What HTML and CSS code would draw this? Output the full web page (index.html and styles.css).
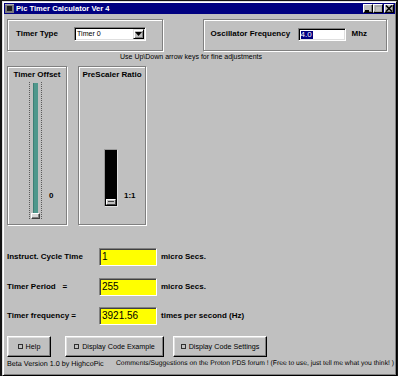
FILE: index.html
```html
<!DOCTYPE html>
<html>
<head>
<meta charset="utf-8">
<title>Pic Timer Calculator Ver 4</title>
<link rel="stylesheet" href="styles.css">
</head>
<body>
<div class="window">
  <div class="titlebar">
    <svg class="app-icon" width="9" height="9" viewBox="0 0 9 9"><rect x="0" y="0" width="9" height="9" fill="#7a7a7a"/><rect x="0" y="0" width="9" height="1" fill="#b0b0b0"/><rect x="2" y="2" width="5" height="5" fill="#1c1c1c"/></svg>
    <span class="title">Pic Timer Calculator Ver 4</span>
    <div class="caption-buttons">
      <span class="cap-btn"><svg width="8" height="7" viewBox="0 0 8 7"><rect x="1" y="5" width="4" height="2" fill="#000"/></svg></span>
      <span class="cap-btn"><svg width="8" height="7" viewBox="0 0 8 7"><rect x="1.5" y="0.5" width="6" height="6" fill="none" stroke="#a8a8a8"/><rect x="1" y="0" width="7" height="2" fill="#a8a8a8"/></svg></span>
      <span class="cap-btn cap-close"><svg width="8" height="7" viewBox="0 0 8 7"><path d="M1 0.5 L7 6.5 M7 0.5 L1 6.5" stroke="#000" stroke-width="1.6"/></svg></span>
    </div>
  </div>
  <div class="content">
    <div class="top-row">
      <div class="group group-type">
        <span class="lbl type-lbl">Timer Type</span>
        <div class="combo">
          <span class="combo-text">Timer 0</span>
          <span class="combo-btn"><svg width="7" height="4" viewBox="0 0 7 4"><path d="M0 0 H7 L3.5 4 Z" fill="#000"/></svg></span>
        </div>
      </div>
      <div class="group group-osc">
        <span class="lbl osc-lbl">Oscillator Frequency</span>
        <div class="textbox"><span class="sel">4.0</span></div>
        <span class="lbl mhz">Mhz</span>
      </div>
    </div>
    <div class="hint">Use Up\Down arrow keys for fine adjustments</div>
    <div class="slider-row">
      <div class="group slider-box offset-box">
        <div class="box-title">Timer Offset</div>
        <div class="box-body">
          <div class="ticks">
            <div class="track"></div>
            <div class="thumb"></div>
          </div>
          <span class="val val-offset">0</span>
        </div>
      </div>
      <div class="group slider-box prescale-box">
        <div class="box-title">PreScaler Ratio</div>
        <div class="box-body">
          <div class="bar">
            <div class="bar-thumb"></div>
          </div>
          <span class="val val-ratio">1:1</span>
        </div>
      </div>
    </div>
    <div class="fields">
      <span class="flabel">Instruct. Cycle Time</span>
      <div class="yfield">1</div>
      <span class="unit">micro Secs.</span>
      <span class="flabel">Timer Period   =</span>
      <div class="yfield">255</div>
      <span class="unit">micro Secs.</span>
      <span class="flabel">Timer frequency =</span>
      <div class="yfield">3921.56</div>
      <span class="unit">times per second (Hz)</span>
    </div>
    <div class="buttons">
      <div class="btn btn-help"><span class="chk"></span>Help</div>
      <div class="btn btn-example"><span class="chk"></span>Display Code Example</div>
      <div class="btn btn-settings"><span class="chk"></span>Display Code Settings</div>
    </div>
    <div class="footer">
      <span class="credit">Beta Version 1.0 by HighcoPic</span>
      <span class="comments">Comments/Suggestions on the Proton PDS forum ! (Free to use, just tell me what you think! )</span>
    </div>
  </div>
</div>
</body>
</html>
```
FILE: styles.css
```css
* { box-sizing: border-box; }
html, body { margin: 0; padding: 0; }
body {
  width: 398px;
  height: 376px;
  overflow: hidden;
  background: #141414;
  padding: 1px 0 0 2px;
  font-family: "Liberation Sans", Arial, sans-serif;
  color: #000;
}
.window {
  width: 395px;
  height: 375px;
  background: #c0c0c0;
  border: 1px solid;
  border-color: #dfdfdf #000 #000 #dfdfdf;
  box-shadow: inset 1px 1px #fff, inset -1px -1px #808080;
  padding: 1px;
  display: flex;
  flex-direction: column;
}
.titlebar {
  height: 11px;
  background: #000080;
  color: #fff;
  display: flex;
  align-items: center;
}
.app-icon { margin-left: 1px; display: block; }
.title {
  margin-left: 2px;
  font-weight: bold;
  font-size: 7.6px;
  line-height: 11px;
  white-space: nowrap;
}
.caption-buttons {
  margin-left: auto;
  margin-right: 1px;
  display: flex;
}
.cap-btn {
  width: 10px;
  height: 9px;
  background: #c0c0c0;
  border: 1px solid;
  border-color: #fff #000 #000 #fff;
  box-shadow: inset -1px -1px #808080;
  display: flex;
  align-items: center;
  justify-content: center;
}
.cap-btn svg { display: block; }
.cap-close { margin-left: 1px; }

.content {
  flex: 1;
  padding: 0 8px 0 3px;
  display: flex;
  flex-direction: column;
}
.group {
  border: 1px solid #808080;
  box-shadow: inset 1px 1px #fff, 1px 1px 0 #fff;
}
.top-row {
  margin-top: 5px;
  display: flex;
}
.group-type, .group-osc {
  height: 32px;
  display: flex;
  align-items: flex-start;
  padding-top: 7px;
}
.group-type { width: 156px; padding-left: 8px; }
.group-osc { width: 185px; margin-left: 40px; padding-left: 7px; }
.lbl {
  font-weight: bold;
  font-size: 8px;
  line-height: 14px;
  white-space: nowrap;
}
.type-lbl { width: 58px; }
.osc-lbl { width: 87px; }
.combo {
  width: 72px;
  height: 14px;
  background: #fff;
  border: 1px solid;
  border-color: #808080 #fff #fff #808080;
  box-shadow: inset 1px 1px #000, inset -1px -1px #dfdfdf;
  display: flex;
  align-items: center;
  padding: 2px 1px 2px 2px;
}
.combo-text {
  font-size: 7.1px;
  line-height: 10px;
  flex: 1;
  white-space: nowrap;
}
.combo-btn {
  width: 11px;
  height: 10px;
  background: #c0c0c0;
  border: 1px solid;
  border-color: #dfdfdf #000 #000 #dfdfdf;
  box-shadow: inset 1px 1px #fff, inset -1px -1px #808080;
  display: flex;
  align-items: center;
  justify-content: center;
}
.combo-btn svg { display: block; }
.textbox {
  width: 48px;
  height: 13px;
  margin-top: 1px;
  background: #fff;
  border: 1px solid;
  border-color: #808080 #fff #fff #808080;
  box-shadow: inset 1px 1px #000, inset -1px -1px #dfdfdf;
  padding: 2px 0 0 2px;
  display: flex;
  align-items: flex-start;
}
.sel {
  background: #000080;
  color: #fff;
  font-size: 8px;
  line-height: 8px;
  height: 8px;
  padding: 0 1px 0 0;
}
.mhz { margin-left: 6px; }

.hint {
  height: 15px;
  padding-left: 113px;
  font-size: 7px;
  line-height: 12px;
  white-space: nowrap;
}

.slider-row {
  display: flex;
  height: 159px;
}
.slider-box {
  height: 159px;
  display: flex;
  flex-direction: column;
}
.offset-box { width: 60px; }
.prescale-box { width: 68px; margin-left: 11px; }
.box-title {
  padding-top: 3px;
  font-weight: bold;
  font-size: 8px;
  line-height: 10px;
  text-align: center;
  white-space: nowrap;
}
.box-body {
  flex: 1;
  display: flex;
  align-items: flex-end;
}
.ticks {
  margin-left: 21px;
  margin-bottom: 5px;
  width: 13px;
  height: 137px;
  border-left: 1px dotted #5a5a5a;
  border-right: 1px dotted #5a5a5a;
  display: flex;
  flex-direction: column;
  align-items: center;
  padding-top: 1px;
}
.track {
  flex: 1;
  width: 5px;
  background: #4f978c;
  border-left: 1px solid #3c7f75;
}
.thumb {
  width: 9px;
  height: 6px;
  background: #d8d8d8;
  border: 1px solid;
  border-color: #fff #404040 #404040 #fff;
  box-shadow: inset -1px -1px #808080;
}
.val {
  font-weight: bold;
  font-size: 8px;
  line-height: 10px;
  margin-bottom: 23px;
}
.val-offset { margin-left: 7px; }
.bar {
  margin-left: 25px;
  margin-bottom: 17px;
  width: 14px;
  height: 58px;
  background: #000;
  border: 1px solid;
  border-color: #9a9a9a #dfdfdf #dfdfdf #9a9a9a;
  display: flex;
  flex-direction: column;
  justify-content: flex-end;
  align-items: center;
  padding-bottom: 1px;
}
.bar-thumb {
  width: 10px;
  height: 6px;
  background: #c0c0c0;
  border: 1px solid;
  border-color: #fff #404040 #404040 #fff;
  position: relative;
}
.bar-thumb::after {
  content: "";
  position: absolute;
  left: 1px;
  right: 1px;
  top: 1px;
  height: 1px;
  background: #404040;
}
.val-ratio { margin-left: 6px; }

.fields {
  margin-top: 23px;
  display: grid;
  grid-template-columns: 92px 58px auto;
  grid-auto-rows: 18px;
  row-gap: 11.5px;
  align-items: center;
}
.flabel, .unit {
  font-weight: bold;
  font-size: 8px;
  line-height: 10px;
  white-space: pre;
}
.unit { margin-left: 4px; }
.yfield {
  height: 18px;
  background: #ffff00;
  border: 1px solid;
  border-color: #808080 #fff #fff #808080;
  box-shadow: inset 1px 1px #404040;
  padding: 0 0 0 2px;
  font-size: 10px;
  line-height: 16px;
}

.buttons {
  margin-top: 11px;
  display: flex;
}
.btn {
  height: 21px;
  background: #c0c0c0;
  border: 1px solid;
  border-color: #fff #000 #000 #fff;
  box-shadow: inset -1px -1px #808080, inset 1px 1px #dfdfdf;
  display: flex;
  align-items: center;
  justify-content: center;
  font-size: 7.2px;
  white-space: nowrap;
}
.btn-help { width: 44px; }
.btn-example { width: 99px; margin-left: 14px; }
.btn-settings { width: 94px; margin-left: 9px; }
.chk {
  width: 5px;
  height: 5px;
  border: 1px solid #303030;
  margin-right: 3px;
}
.footer {
  display: flex;
  font-size: 7.2px;
  line-height: 14px;
  white-space: nowrap;
  text-rendering: geometricPrecision;
}
.credit { flex: none; width: 109px; }
.comments { flex: none; font-size: 6.75px; }
```
